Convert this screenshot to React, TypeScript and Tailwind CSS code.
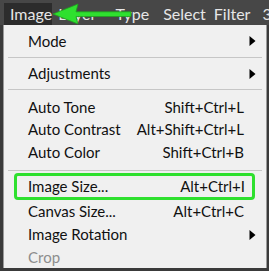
import React from 'react';

type Item = { label: string; shortcut?: string; sub?: boolean; disabled?: boolean };

const Arrow = () => (
    <svg width="9" height="10" viewBox="0 0 6 10" className="shrink-0">
        <path d="M0 0 L6 5 L0 10 Z" fill="#000" />
    </svg>
);

const Row: React.FC<{ item: Item; h: string }> = ({ item, h }) => (
    <div className={`${h} flex items-center justify-between whitespace-nowrap pl-[24px] ${item.sub ? 'pr-[9px]' : 'pr-[22px]'}`}>
        <span className={item.disabled ? 'text-[#8d8d8d]' : 'text-[#111]'}>{item.label}</span>
        {item.shortcut && <span className="text-[#111]">{item.shortcut}</span>}
        {item.sub && <Arrow />}
    </div>
);

const Sep = () => <div className="h-px mx-[4px] bg-[#c6c6c6]" />;

export default function App() {
    return (
        <div
            className="w-[269px] h-[271px] overflow-hidden bg-[#3a3a3a] relative text-[15px] leading-none"
            style={{ fontFamily: 'Lato, "Open Sans", sans-serif' }}
        >
            {/* menu bar */}
            <div className="h-[25px] bg-[#474747] flex items-end text-[#e6e6e6] whitespace-nowrap text-[16px]">
                <div className="ml-[4px] h-[22px] w-[53px] bg-[#2c2c2c] flex items-center pl-[6px]">Image</div>
                <div className="h-[22px] flex items-center ml-[6px]">Layer</div>
                <div className="h-[22px] flex items-center ml-[19px]">Type</div>
                <div className="h-[22px] flex items-center ml-[14px]">Select</div>
                <div className="h-[22px] flex items-center ml-[8px]">Filter</div>
                <div className="h-[22px] flex items-center ml-[12px]">3D</div>
            </div>

            {/* green annotation arrow */}
            <svg className="absolute left-0 top-0" width="140" height="28" viewBox="0 0 140 28">
                <path d="M53 14 L78 4 L76 11.8 L131 11.8 L131 16.5 L76 16.5 L78 24 Z" fill="#2fe02f" stroke="#1fa01f" strokeWidth="0.8" strokeLinejoin="round" />
            </svg>

            {/* dropdown */}
            <div className="ml-[3px] w-[264px] bg-[#f0f0f0] border-l border-r border-[#9a9a9a]">
                <Row item={{ label: 'Mode', sub: true }} h="h-[32px]" />
                <Sep />
                <Row item={{ label: 'Adjustments', sub: true }} h="h-[31px]" />
                <Sep />
                <div className="pt-[6px] pb-[7px]">
                    <Row item={{ label: 'Auto Tone', shortcut: 'Shift+Ctrl+L' }} h="h-[22px]" />
                    <Row item={{ label: 'Auto Contrast', shortcut: 'Alt+Shift+Ctrl+L' }} h="h-[23px]" />
                    <Row item={{ label: 'Auto Color', shortcut: 'Shift+Ctrl+B' }} h="h-[22px]" />
                </div>
                <Sep />
                <div className="pt-[2px]">
                    <div className="ml-[10px] mr-[11px] h-[27px] border-[3px] border-[#2ee02e] rounded-[4px] flex items-center justify-between whitespace-nowrap pl-[11px] pr-[7px] text-[#111]">
                        <span>Image Size...</span>
                        <span>Alt+Ctrl+I</span>
                    </div>
                    <Row item={{ label: 'Canvas Size...', shortcut: 'Alt+Ctrl+C' }} h="h-[23px]" />
                    <Row item={{ label: 'Image Rotation', sub: true }} h="h-[23px]" />
                    <Row item={{ label: 'Crop', disabled: true }} h="h-[22px]" />
                </div>
            </div>
        </div>
    );
}
